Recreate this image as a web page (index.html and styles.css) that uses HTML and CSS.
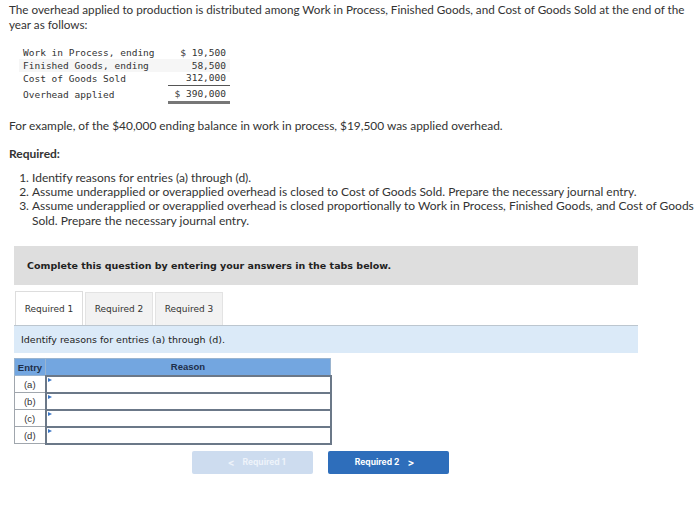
FILE: index.html
```html
<!DOCTYPE html>
<html>
<head>
<meta charset="utf-8">
<link rel="stylesheet" href="styles.css">
</head>
<body>
<div class="page">
  <p class="intro">The overhead applied to production is distributed among Work in Process, Finished Goods, and Cost of Goods Sold at the end of the year as follows:</p>

  <table class="oh">
    <tr><td class="lbl">Work in Process, ending</td><td class="val">$ 19,500</td></tr>
    <tr class="alt"><td class="lbl">Finished Goods, ending</td><td class="val">58,500</td></tr>
    <tr><td class="lbl">Cost of Goods Sold</td><td class="val under">312,000</td></tr>
    <tr><td class="lbl tot">Overhead applied</td><td class="val tot dbl">$ 390,000</td></tr>
  </table>

  <p class="example">For example, of the $40,000 ending balance in work in process, $19,500 was applied overhead.</p>

  <p class="req">Required:</p>
  <ol class="reqlist">
    <li>Identify reasons for entries (a) through (d).</li>
    <li>Assume underapplied or overapplied overhead is closed to Cost of Goods Sold. Prepare the necessary journal entry.</li>
    <li>Assume underapplied or overapplied overhead is closed proportionally to Work in Process, Finished Goods, and Cost of Goods Sold. Prepare the necessary journal entry.</li>
  </ol>

  <div class="qbox">Complete this question by entering your answers in the tabs below.</div>

  <div class="tabs">
    <div class="tab active">Required 1</div>
    <div class="tab">Required 2</div>
    <div class="tab">Required 3</div>
  </div>
  <div class="instr">Identify reasons for entries (a) through (d).</div>

  <table class="entries">
    <tr><th class="ecol">Entry</th><th class="rcol">Reason</th></tr>
    <tr><td class="ecol">(a)</td><td class="rcol"><span class="flag"></span></td></tr>
    <tr><td class="ecol">(b)</td><td class="rcol"><span class="flag"></span></td></tr>
    <tr><td class="ecol">(c)</td><td class="rcol"><span class="flag"></span></td></tr>
    <tr><td class="ecol">(d)</td><td class="rcol"><span class="flag"></span></td></tr>
  </table>

  <div class="nav">
    <div class="btn prev"><span class="chev">&lt;</span> Required 1</div>
    <div class="btn next">Required 2 <span class="chev">&gt;</span></div>
  </div>
</div>
</body>
</html>
```
FILE: styles.css
```css
* { box-sizing: border-box; }
body {
  margin: 0;
  background: #fff;
  font-family: "Lato", "Open Sans", sans-serif;
  color: #333;
}
.page {
  padding: 2px 0 0 9px;
  width: 700px;
}
.intro {
  margin: 0;
  font-size: 11.7px;
  line-height: 15px;
}
.oh {
  border-collapse: collapse;
  margin: 14px 0 0 10px;
  font-family: "DejaVu Sans Mono", monospace;
  font-size: 9.5px;
  color: #333;
}
.oh td {
  padding: 0 4px;
  height: 13px;
  line-height: 12px;
}
.oh .lbl { width: 149px; }
.oh .val { text-align: right; width: 62px; }
.oh .alt td { background: #f6f6f6; }
.oh .under { border-bottom: 1px solid #555; }
.oh .tot { height: 17px; padding-top: 2px; }
.oh .dbl { border-bottom: 3px solid #777; }
.example {
  margin: 14px 0 0 0;
  font-size: 11.9px;
  line-height: 15px;
}
.req {
  margin: 13px 0 0 0;
  font-size: 12px;
  font-weight: bold;
  line-height: 15px;
}
.reqlist {
  margin: 10px 0 0 0;
  padding-left: 23px;
  font-size: 12px;
  line-height: 14.4px;
}
.qbox {
  margin: 18px 0 0 5px;
  width: 624px;
  height: 39px;
  background: #dedede;
  font-family: "DejaVu Sans", Verdana, sans-serif;
  font-weight: bold;
  font-size: 9.5px;
  color: #222;
  display: flex;
  align-items: center;
  padding-left: 13px;
}
.tabs {
  display: flex;
  gap: 2px;
  margin: 6px 0 0 6px;
  height: 34px;
  align-items: flex-end;
}
.tab {
  width: 68px;
  height: 33px;
  background: #f2f2f2;
  border: 1px solid #e3e3e3;
  border-bottom: none;
  font-family: "DejaVu Sans", Verdana, sans-serif;
  font-size: 9px;
  color: #333;
  display: flex;
  align-items: center;
  justify-content: center;
}
.tab.active {
  background: #fff;
  height: 34px;
  border-color: #ddd;
}
.instr {
  margin-left: 5px;
  width: 624px;
  height: 28px;
  background: #dbeaf8;
  border-top: 1px solid #bcc6cf;
  font-family: "DejaVu Sans", Verdana, sans-serif;
  font-size: 9.5px;
  color: #222;
  display: flex;
  align-items: center;
  padding-left: 7px;
}
.entries {
  margin: 5px 0 0 5px;
  border-collapse: collapse;
  font-family: "Liberation Sans", Arial, sans-serif;
  font-size: 9.5px;
  color: #333;
}
.entries th {
  background: #73a6e0;
  color: #1e2f4a;
  font-weight: bold;
  height: 17px;
  padding: 0;
  border: 1px solid #9ab4cf;
}
.entries td {
  height: 17px;
  padding: 0;
  border: 1px solid #a0a6ad;
}
.entries td.rcol {
  border: 2px solid #6b7888;
  position: relative;
  background: #fff;
}
.entries .ecol { width: 31px; text-align: center; }
.entries .rcol { width: 285px; }
.flag {
  position: absolute;
  left: 1px;
  top: 1px;
  width: 0;
  height: 0;
  border-top: 2.5px solid transparent;
  border-bottom: 2.5px solid transparent;
  border-left: 4px solid #3a75c4;
}
.nav {
  display: flex;
  gap: 15px;
  margin: 6px 0 0 183px;
}
.btn {
  width: 121px;
  height: 23px;
  border-radius: 2px;
  font-family: "Inter", "Liberation Sans", sans-serif;
  font-weight: bold;
  font-size: 8.5px;
  display: flex;
  align-items: center;
  justify-content: center;
  color: #fff;
}
.btn.prev { background: #cddcef; color: #eef3fa; }
.btn.next { background: #2e6ebb; }
.chev { margin: 0 8px; font-size: 10px; }
```
